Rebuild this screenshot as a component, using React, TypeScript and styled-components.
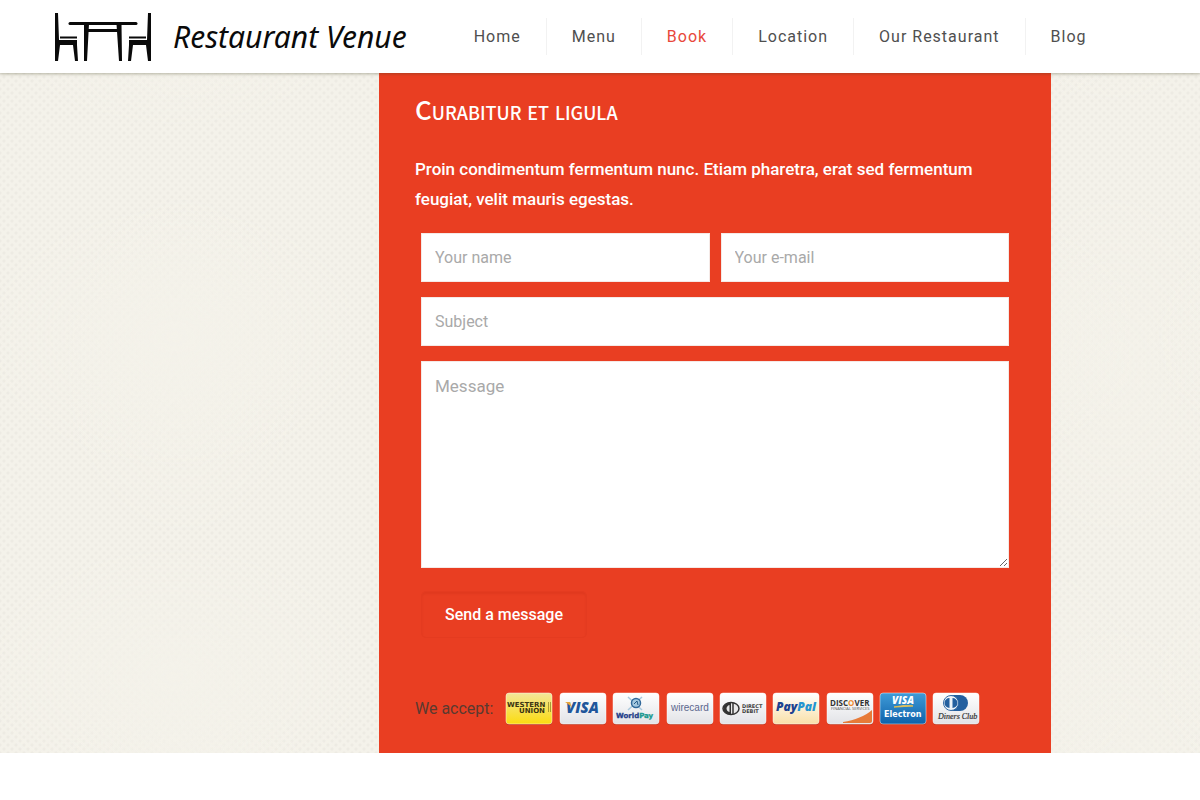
import React from "react";
import styled, { createGlobalStyle } from "styled-components";

const red = "#e93e22";

const GlobalStyle = createGlobalStyle`
  *, *::before, *::after { box-sizing: border-box; }
  body {
    margin: 0;
    background: #fff;
    color: #484643;
    font-family: Roboto, "Liberation Sans", sans-serif;
    font-size: 16px;
  }
`;

const Header = styled.header`
  position: relative;
  z-index: 1;
  display: flex;
  align-items: center;
  gap: 42px;
  height: 73px;
  padding: 0 54px;
  background: #fff;
  box-shadow: 0 1px 3px rgba(60, 60, 30, 0.35);
`;

const Brand = styled.a`
  display: flex;
  align-items: center;
  gap: 20px;
  color: #0a0a0a;
  text-decoration: none;
  font: italic 400 30px/40px "Noto Sans", "Open Sans", sans-serif;
  white-space: nowrap;
`;

const NavList = styled.ul`
  display: flex;
  margin: 0;
  padding: 0;
  list-style: none;
`;

const NavItem = styled.li`
  display: flex;
  & + & { border-left: 1px solid #f2f2f2; }
`;

const NavLink = styled.a<{ $active?: boolean }>`
  padding: 0 25px;
  color: ${(p) => (p.$active ? "#e8483a" : "#4f4f4f")};
  font-size: 16px;
  line-height: 37px;
  letter-spacing: 1px;
  text-decoration: none;
  white-space: nowrap;
`;

const Section = styled.main`
  display: grid;
  grid-template-columns: 379fr 672fr 149fr;
  background-color: #f4f2ea;
  background-image:
    radial-gradient(ellipse 190px 130px at 55% 60%, rgba(244, 242, 234, 1), rgba(244, 242, 234, 0)),
    radial-gradient(ellipse 120px 170px at 40% 40%, rgba(244, 242, 234, 0.8), rgba(244, 242, 234, 0)),
    radial-gradient(circle, #edebe3 1px, transparent 2px),
    radial-gradient(circle, #edebe3 1px, transparent 2px);
  background-size: 390px 340px, 310px 430px, 8px 8px, 8px 8px;
  background-position: -40px 60px, 60px 120px, 0 0, 4px 4px;
`;

const Panel = styled.section`
  grid-column: 2;
  padding: 16px 36px 27px;
  background: ${red};
  color: #fff;
`;

const Title = styled.h2`
  margin: 0;
  font: 500 26px/40px "Noto Sans CJK JP", "Liberation Sans", sans-serif;
  font-variant: small-caps;
`;

const Intro = styled.p`
  margin: 25px 0 19px;
  font-size: 17px;
  font-weight: 500;
  line-height: 30px;
`;

const Form = styled.form`
  display: grid;
  grid-template-columns: 1fr 1fr;
  gap: 15px 11px;
  padding: 0 6px;
`;

const Field = styled.label<{ $wide?: boolean }>`
  display: flex;
  grid-column: ${(p) => (p.$wide ? "1 / -1" : "auto")};
`;

const Input = styled.input`
  width: 100%;
  height: 49px;
  padding: 0 13px;
  border: 1px solid #f5e9e6;
  border-radius: 0;
  background: #fff;
  color: #626262;
  font: 400 16px/24px Roboto, sans-serif;
  &::placeholder { color: #a9a9a9; opacity: 1; }
`;

const TextArea = styled.textarea`
  width: 100%;
  height: 207px;
  padding: 12px 13px;
  border: 1px solid #f5e9e6;
  border-radius: 0;
  background: #fff;
  color: #626262;
  font: 400 17px/24px Roboto, sans-serif;
  resize: vertical;
  &::placeholder { color: #a9a9a9; opacity: 1; }
`;

const Submit = styled.button`
  justify-self: start;
  height: 47px;
  margin-top: 8px;
  padding: 0 23px;
  border: 1px solid #e43b20;
  border-radius: 5px;
  background: ${red};
  box-shadow: inset 0 2px 2px rgba(150, 20, 0, 0.1);
  color: #fff;
  font: 500 16px/24px Roboto, sans-serif;
`;

const Accept = styled.div`
  display: flex;
  align-items: center;
  gap: 12px;
  margin-top: 54px;
  color: #5a3a30;
  font-size: 16px;
  line-height: 34px;
  white-space: nowrap;
`;

const Cards = styled.ul`
  display: flex;
  justify-content: space-between;
  width: 475px;
  margin: 0;
  padding: 0;
  list-style: none;
`;

const CardItem = styled.li`
  display: flex;
`;

function TableLogo() {
  const chair = "M1 1h3l1 27h18v5l1 16h-3l-2-16H6L4 49H1zM6 24.500h17v2H6z";
  return (
    <svg width="99" height="50" viewBox="0 0 99 50" fill="#0a0a0a" aria-hidden="true">
      <path d={chair} />
      <path d={chair} transform="translate(98 0) scale(-1 1)" />
      <path d="M16 11.500h66" stroke="#0a0a0a" strokeWidth="3" strokeLinecap="round" />
      <path d="M30 12h5l-2 37h-3zM62.500 12h5l.5 37h-3z" />
      <path d="M33 18.500h32" stroke="#0a0a0a" strokeWidth="3" />
    </svg>
  );
}

function Card({ name, fill = "url(#silver)", children }: { name: string; fill?: string; children: React.ReactNode }) {
  return (
    <svg width="48" height="34" viewBox="0 0 48 34" role="img" aria-label={name} fontFamily="Open Sans, sans-serif">
      <rect x="1" y="2" width="46" height="31" rx="3" fill="#8f2b18" opacity=".45" />
      <rect x="1" y="1" width="46" height="31" rx="3" fill={fill} stroke="#fff" strokeOpacity=".45" />
      {children}
    </svg>
  );
}

const cards: { name: string; fill?: string; art: React.ReactNode }[] = [
  {
    name: "Western Union",
    fill: "url(#gold)",
    art: (
      <g fontFamily="DejaVu Sans" fontWeight="700" fontSize="7" fill="#3b3412">
        <text x="2" y="15">WESTERN</text>
        <text x="14" y="21">UNION</text>
        <path d="M43.500 10v10M45.500 10v10" stroke="#776914" strokeWidth=".6" />
      </g>
    ),
  },
  {
    name: "Visa",
    art: (
      <>
        <text x="7" y="21" fontSize="15" fontWeight="800" fontStyle="italic" fill="#20569b">VISA</text>
        <path d="M6 10h5l2 6c-2-3-4-4-7-6z" fill="#e8a63a" />
      </>
    ),
  },
  {
    name: "WorldPay",
    art: (
      <>
        <path d="M16 5l14 13M30 5L16 18" stroke="#a9c8dc" strokeWidth="1.500" />
        <circle cx="24" cy="11" r="4.500" fill="#a5c8df" stroke="#31689a" strokeWidth="1.500" />
        <path d="M22 12l3-3 1 4" fill="none" stroke="#245987" />
        <g fontFamily="DejaVu Sans" fontSize="7" fontWeight="700">
          <text x="4" y="26" fill="#243d89" stroke="#243d89" strokeWidth=".3">World<tspan fill="#16988e" stroke="#16988e">Pay</tspan></text>
        </g>
      </>
    ),
  },
  {
    name: "Wirecard",
    art: <text x="5" y="19" fontFamily="Liberation Sans" fontSize="10" fill="#5c678e">wirecard</text>,
  },
  {
    name: "Direct Debit",
    art: (
      <>
        <ellipse cx="12" cy="16.500" rx="8" ry="6" fill="#e9e9e9" stroke="#333" strokeWidth="1.500" />
        <path d="M12 10.500c-10 0-10 12 0 12z" fill="#333" />
        <path d="M10.500 13v7c-4-1-4-6 0-7z" fill="#e5e5e5" />
        <path d="M14 11v11" stroke="#333" strokeWidth="1.500" />
        <g fontFamily="DejaVu Sans" fontSize="5" fontWeight="700" fill="#3e3e3e">
          <text x="23" y="16">DIRECT</text>
          <text x="23" y="21">DEBIT</text>
        </g>
      </>
    ),
  },
  {
    name: "PayPal",
    fill: "url(#cream)",
    art: <text x="4" y="19" fontSize="12" fontWeight="800" fontStyle="italic" fill="#1c4290">Pay<tspan fill="#2494d1">Pal</tspan></text>,
  },
  {
    name: "Discover",
    art: (
      <>
        <path d="M17 30c12-2 22-6 29-12v11c0 1-1 2-2 2H17z" fill="#e77a38" />
        <text x="4" y="14" fontFamily="Open Sans" fontSize="8" fontWeight="700" fill="#333">DISC<tspan fill="#ed8b32">O</tspan>VER</text>
        <text x="5" y="18" fontSize="4" fill="#555">FINANCIAL SERVICES</text>
      </>
    ),
  },
  {
    name: "Visa Electron",
    fill: "url(#blue)",
    art: (
      <g fill="#fff" fontWeight="800">
        <text x="13" y="12" fontSize="10" fontStyle="italic">VISA</text>
        <path d="M15 15c6-1 12-2 19-1-5 0-12 1-19 1z" stroke="#dfbd50" strokeWidth="1" />
        <text x="5" y="25" fontFamily="DejaVu Sans" fontWeight="700" fontSize="8">Electron</text>
      </g>
    ),
  },
  {
    name: "Diners Club",
    art: (
      <>
        <path d="M19 3h9a8 8 0 010 16h-9z" fill="#235f9f" />
        <circle cx="19" cy="11" r="7.500" fill="#edf3f9" stroke="#2f68a5" />
        <path d="M17.500 6a5 5 0 000 10zM20.500 6a5 5 0 010 10z" fill="#235f9f" />
        <text x="6" y="27" fontFamily="Liberation Serif" fontStyle="italic" fontSize="8" fill="#333" stroke="#333" strokeWidth=".2">Diners Club</text>
      </>
    ),
  },
];

const gradients = [
  ["silver", "#ffffff", "#e2e3e7"],
  ["gold", "#f3e69a", "#fbdc10"],
  ["cream", "#ffffff", "#f9e0a8"],
  ["blue", "#3f9bd8", "#0f62aa"],
];

const Defs = styled.svg`
  position: absolute;
  width: 0;
  height: 0;
`;

const links = ["Home", "Menu", "Book", "Location", "Our Restaurant", "Blog"];

export default function App() {
  return (
    <>
      <GlobalStyle />
      <Defs aria-hidden="true">
        <defs>
          {gradients.map(([id, from, to]) => (
            <linearGradient id={id} key={id} x1="0" y1="0" x2="0" y2="1">
              <stop offset="0" stopColor={from} />
              <stop offset="1" stopColor={to} />
            </linearGradient>
          ))}
        </defs>
      </Defs>
      <Header>
        <Brand href="#home">
          <TableLogo />
          Restaurant Venue
        </Brand>
        <nav>
          <NavList>
            {links.map((link) => (
              <NavItem key={link}>
                <NavLink href="#" $active={link === "Book"}>{link}</NavLink>
              </NavItem>
            ))}
          </NavList>
        </nav>
      </Header>
      <Section>
        <Panel>
          <Title>Curabitur et ligula</Title>
          <Intro>
            Proin condimentum fermentum nunc. Etiam pharetra, erat sed fermentum feugiat, velit mauris egestas.
          </Intro>
          <Form onSubmit={(e) => e.preventDefault()}>
            <Field><Input type="text" aria-label="Your name" placeholder="Your name" /></Field>
            <Field><Input type="email" aria-label="Your e-mail" placeholder="Your e-mail" /></Field>
            <Field $wide><Input type="text" aria-label="Subject" placeholder="Subject" /></Field>
            <Field $wide><TextArea aria-label="Message" placeholder="Message" /></Field>
            <Submit type="submit">Send a message</Submit>
          </Form>
          <Accept>
            <span>We accept:</span>
            <Cards>
              {cards.map((card) => (
                <CardItem key={card.name}>
                  <Card name={card.name} fill={card.fill}>{card.art}</Card>
                </CardItem>
              ))}
            </Cards>
          </Accept>
        </Panel>
      </Section>
    </>
  );
}
